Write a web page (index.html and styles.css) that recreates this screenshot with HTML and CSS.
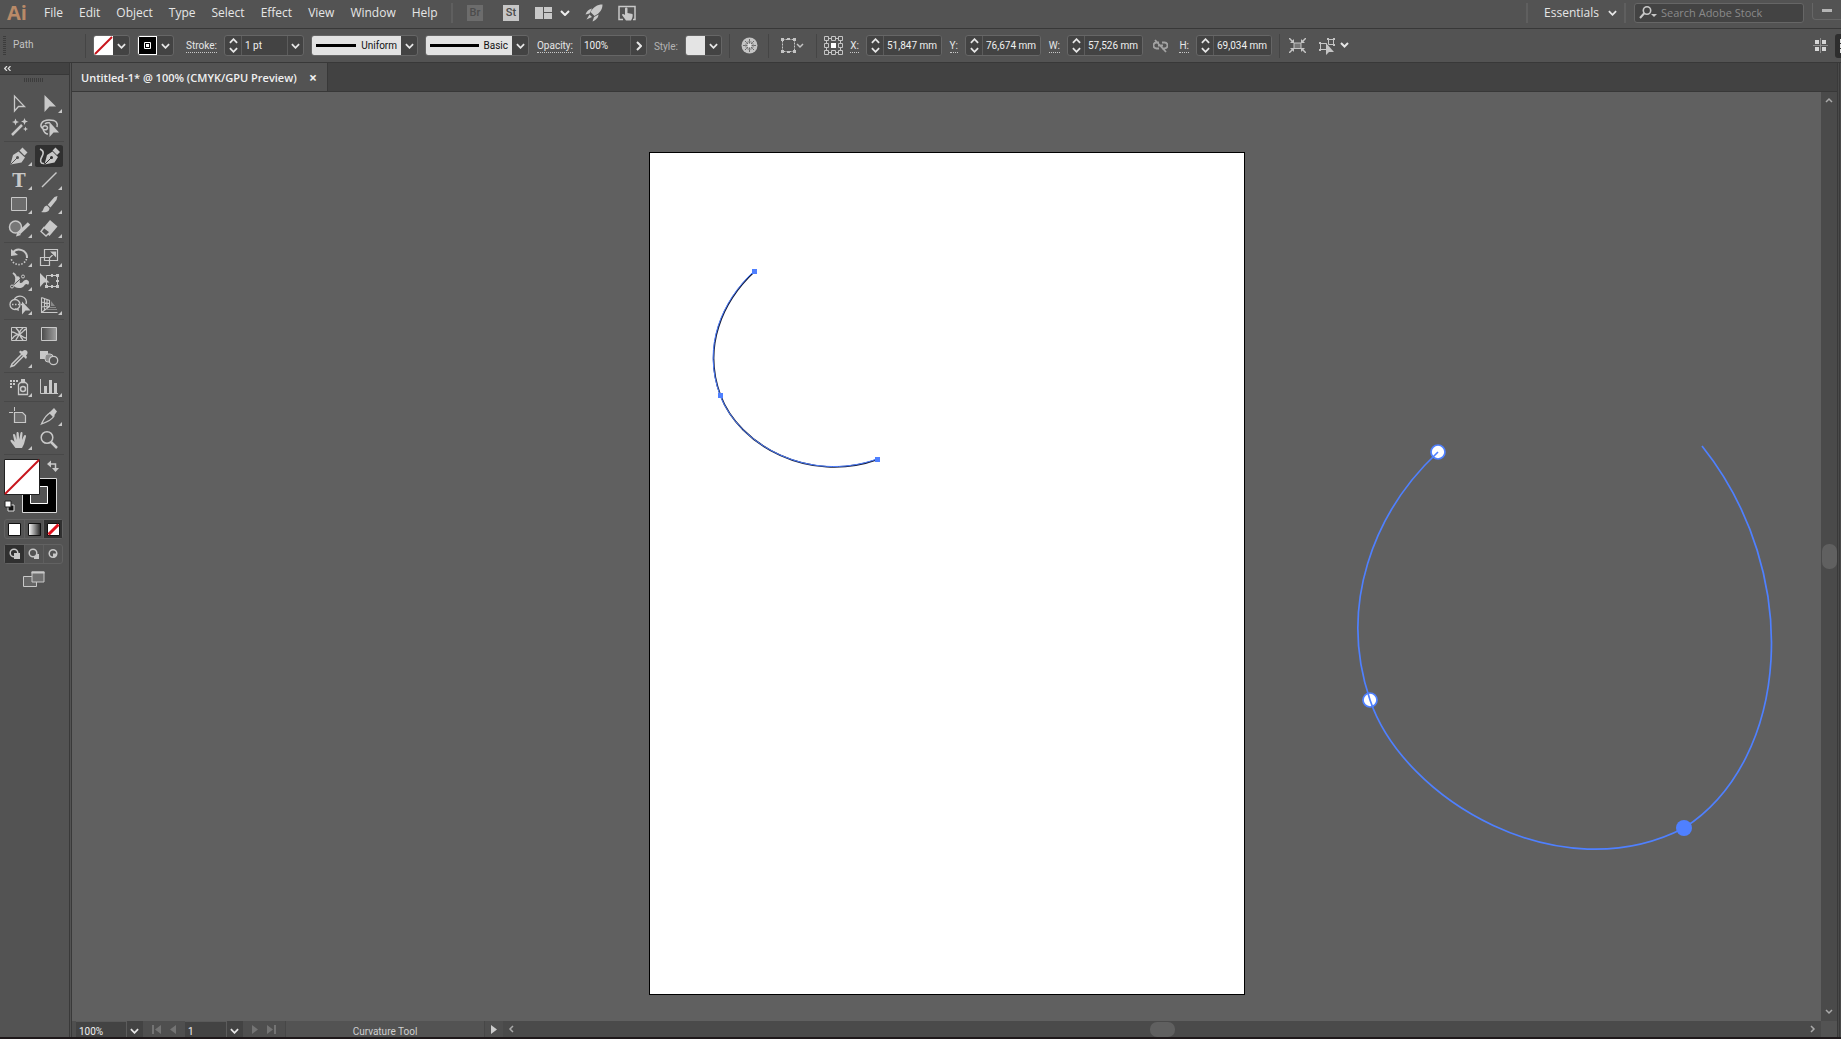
FILE: index.html
```html
<!DOCTYPE html>
<html lang="en">
<head>
<meta charset="utf-8">
<title>Untitled-1 - Adobe Illustrator</title>
<link rel="stylesheet" href="styles.css">
</head>
<body>
<svg class="defs" width="0" height="0" aria-hidden="true">
  <defs>
    <symbol id="chev" viewBox="0 0 10 6"><path d="M1 1l4 4 4-4" fill="none" stroke="currentColor" stroke-width="2"/></symbol>
    <symbol id="spin" viewBox="0 0 10 16"><path d="M1 5l4-4 4 4M1 11l4 4 4-4" fill="none" stroke="currentColor" stroke-width="2"/></symbol>
    <symbol id="flag" viewBox="0 0 28 24"><path d="M27 18v4h-4z" fill="currentColor"/></symbol>
    <linearGradient id="gr"><stop offset="0" stop-color="#4a4a4a"/><stop offset="1" stop-color="#a0a0a0"/></linearGradient>
    <linearGradient id="bw"><stop offset="0" stop-color="#fff"/><stop offset="1" stop-color="#222"/></linearGradient>
  </defs>
</svg>

<header class="menubar">
  <div class="logo">Ai</div>
  <nav class="menus">
    <button>File</button><button>Edit</button><button>Object</button><button>Type</button><button>Select</button><button>Effect</button><button>View</button><button>Window</button><button>Help</button>
  </nav>
  <span class="sep"></span>
  <div class="apps">
    <button class="app off">Br</button>
    <button class="app">St</button>
    <button class="arrange" aria-label="Arrange documents">
      <svg width="17" height="12"><path d="M0 0h8v12H0zM9 0h8v5H9zM9 6h8v6H9z" fill="currentColor"/></svg>
      <svg width="10" height="6" class="bright"><use href="#chev"/></svg>
    </button>
    <button class="plain" aria-label="GPU performance">
      <svg width="18" height="18" viewBox="0 0 18 18"><path d="M17.500 .5C12 .5 8.500 3 5.500 8l4 4C15 9 17.500 5.500 17.500 .5zM7 4.500C4 5 1.500 7.500 .5 10.500l4-1zM13.500 10.500c0 3-2.500 5.500-6 7l1.500-4.500zM4.500 10.500l-3 5 5.500-2.500z" fill="currentColor"/></svg>
    </button>
    <button class="plain" aria-label="Touch workspace">
      <svg width="18" height="16" viewBox="0 0 18 16"><path d="M5 14.500H1v-13h16v13h-2" fill="none" stroke="currentColor" stroke-width="1.500"/><path d="M7 3.500c0-1.500 2.500-1.500 2.500 0V8l5 1c.5 2 0 4-1.500 6.500H8L4 10c0-1.500 1.500-1.500 3 0z" fill="currentColor"/></svg>
    </button>
  </div>
  <div class="workspace">
    <span class="sep"></span>
    <button class="essentials">Essentials <svg width="9" height="6"><use href="#chev"/></svg></button>
    <span class="sep"></span>
    <label class="search">
      <svg width="18" height="14" viewBox="0 0 18 14"><circle cx="8" cy="4.500" r="3.700" fill="none" stroke="currentColor" stroke-width="1.600"/><path d="M5.500 7L1 12" stroke="currentColor" stroke-width="2"/><path d="M12 8h6l-3 3z" fill="currentColor"/></svg>
      <input type="text" placeholder="Search Adobe Stock" aria-label="Search Adobe Stock">
    </label>
    <button class="minimize" aria-label="Minimize"><i></i></button>
  </div>
</header>

<div class="control">
  <span class="grip"></span>
  <span class="kind">Path</span>
  <span class="sep"></span>
  <div class="combo">
    <button class="swatch fill-none" aria-label="Fill"><svg width="19" height="19"><path d="M1 18L18 1" stroke="#c8141c" stroke-width="2"/></svg></button>
    <button class="drop" aria-label="Fill options"><svg width="9" height="6"><use href="#chev"/></svg></button>
  </div>
  <div class="combo">
    <button class="swatch stroke-black" aria-label="Stroke color"><svg width="17" height="17"><path d="M5.500 5.500h6v6h-6z" fill="none" stroke="#fff"/><path d="M7 7h3v3H7z" fill="#fff"/></svg></button>
    <button class="drop" aria-label="Stroke color options"><svg width="9" height="6"><use href="#chev"/></svg></button>
  </div>
  <label class="lbl l36" for="stroke"><span>Stroke:</span></label>
  <div class="combo w80">
    <button class="step" aria-label="Step stroke"><svg width="9" height="15"><use href="#spin"/></svg></button>
    <input id="stroke" value="1 pt">
    <button class="drop" aria-label="Stroke weights"><svg width="9" height="6"><use href="#chev"/></svg></button>
  </div>
  <div class="combo w107">
    <button class="profile"><i></i>Uniform</button>
    <button class="drop" aria-label="Width profiles"><svg width="9" height="6"><use href="#chev"/></svg></button>
  </div>
  <div class="combo w104">
    <button class="profile"><i></i>Basic</button>
    <button class="drop" aria-label="Brushes"><svg width="9" height="6"><use href="#chev"/></svg></button>
  </div>
  <label class="lbl l37" for="opacity"><span>Opacity:</span></label>
  <div class="combo w67">
    <input id="opacity" value="100%">
    <button class="drop" aria-label="Opacity slider"><svg width="6" height="10"><path d="M1 1l4 4-4 4" fill="none" stroke="currentColor" stroke-width="2"/></svg></button>
  </div>
  <span class="lbl l24 dim">Style:</span>
  <div class="combo">
    <button class="swatch style-swatch" aria-label="Graphic style"></button>
    <button class="drop" aria-label="Graphic styles"><svg width="9" height="6"><use href="#chev"/></svg></button>
  </div>
  <span class="sep"></span>
  <button class="icon i24" aria-label="Recolor artwork"><svg width="17" height="17" viewBox="0 0 17 17"><circle cx="8.500" cy="8.500" r="8" fill="currentColor"/><path d="M8.500 2v13M2 8.500h13M4 4l9 9M13 4l-9 9" stroke="#6a6a6a"/><circle cx="8.500" cy="8.500" r="4" fill="none" stroke="#8a8a8a"/><circle cx="8.500" cy="8.500" r="2" fill="#ddd"/></svg></button>
  <span class="sep"></span>
  <button class="icon i33" aria-label="Align to selection"><svg width="23" height="15" viewBox="0 0 23 15"><path d="M1.500 1.500h12v12h-12z" fill="none" stroke="currentColor" stroke-dasharray="2 1"/><path d="M0 0h3v3H0zM12 0h3v3h-3zM0 12h3v3H0zM12 12h3v3h-3zM6 0h3v2H6zM6 13h3v2H6z" fill="currentColor"/><path d="M16 6l3 3 3-3" fill="none" stroke="currentColor" stroke-width="1.500"/></svg></button>
  <span class="sep"></span>
  <button class="icon i19" aria-label="Reference point"><svg width="19" height="19" viewBox="0 0 19 19"><path d="M.5 .5h4v4h-4zM7.500 .5h4v4h-4zM14.500 .5h4v4h-4zM.5 7.500h4v4h-4zM14.500 7.500h4v4h-4zM.5 14.500h4v4h-4zM7.500 14.500h4v4h-4zM14.500 14.500h4v4h-4zM4.500 2.500h3M11.500 2.500h3M4.500 16.500h3M11.500 16.500h3M2.500 4.500v3M2.500 11.500v3M16.500 4.500v3M16.500 11.500v3" fill="none" stroke="currentColor"/><path d="M7 7h5v5H7z" fill="#fff"/></svg></button>
  <label class="lbl l9" for="px"><span>X:</span></label>
  <div class="combo w76"><button class="step" aria-label="Step X"><svg width="9" height="15"><use href="#spin"/></svg></button><input id="px" value="51,847 mm"></div>
  <label class="lbl l9" for="py"><span>Y:</span></label>
  <div class="combo w76"><button class="step" aria-label="Step Y"><svg width="9" height="15"><use href="#spin"/></svg></button><input id="py" value="76,674 mm"></div>
  <label class="lbl l12" for="pw"><span>W:</span></label>
  <div class="combo w76"><button class="step" aria-label="Step W"><svg width="9" height="15"><use href="#spin"/></svg></button><input id="pw" value="57,526 mm"></div>
  <button class="icon i20 faded" aria-label="Constrain proportions"><svg width="15" height="14" viewBox="0 0 15 14"><path d="M6 3.500H3.500a3 3 0 0 0 0 6H6M9 3.500h2.500a3 3 0 0 1 0 6H9M5 6.500h5M2 1l11 12" fill="none" stroke="currentColor" stroke-width="1.800"/></svg></button>
  <label class="lbl l12" for="ph"><span>H:</span></label>
  <div class="combo w76"><button class="step" aria-label="Step H"><svg width="9" height="15"><use href="#spin"/></svg></button><input id="ph" value="69,034 mm"></div>
  <span class="sep"></span>
  <button class="icon i20" aria-label="Isolate selected object"><svg width="17" height="15" viewBox="0 0 17 15"><path d="M5 5h7v5.500H5z" fill="#777" stroke="currentColor"/><path d="M0 0l4 4M17 0l-4 4M0 15l4-4M17 15l-4-4" stroke="currentColor" stroke-width="1.500"/><path d="M5 1v4H1zM12 1v4h4zM5 14v-4H1zM12 14v-4h4z" fill="currentColor"/></svg></button>
  <button class="icon i40" aria-label="Select similar objects"><svg width="30" height="18" viewBox="0 0 30 18"><path d="M1.500 6.500h6v6h-6zM9.500 2.500h5v5h-5z" fill="none" stroke="currentColor"/><path d="M0 5h2v2H0zM0 12h2v2H0zM14 1h2v2h-2zM14 7h2v2h-2zM8 1h2v2H8z" fill="currentColor"/><path d="M7 6v12l3-3h5z" fill="currentColor"/><path d="M22 6l3.500 3.500L29 6" fill="none" stroke="#e6e6e6" stroke-width="2"/></svg></button>
  <div class="panel-ends">
    <button class="icon i20" aria-label="Align panels"><svg width="15" height="15" viewBox="0 0 15 15"><path d="M2 2h4v4H2zM9 2h4v4H9zM2 9h4v4H2zM9 9h4v4H9z" fill="#d6d6d6"/><path d="M7.500 0v15M0 7.500h15" stroke="#8c8c8c"/></svg></button>
    <button class="edge-btn" aria-label="Panel options"><i></i></button>
  </div>
</div>

<div class="body">
  <aside class="tools">
    <div class="tools-head"><svg width="7" height="5" viewBox="0 0 7 5"><path d="M3 0L.7 2.500 3 5M6.500 0L4.200 2.500 6.500 5" fill="none" stroke="#ddd" stroke-width="1.200"/></svg></div>
    <span class="hgrip"></span>
    <div class="group">
      <button aria-label="Selection"><svg viewBox="0 0 28 24"><path d="M9.500 5v15l4-4.500h6z" fill="none" stroke="currentColor" stroke-width="1.300"/></svg></button>
      <button aria-label="Direct selection"><svg viewBox="0 0 28 24"><path d="M9.500 4v17l5-5.500H21z" fill="currentColor"/><use href="#flag"/></svg></button>
      <button aria-label="Magic wand"><svg viewBox="0 0 28 24"><path d="M7 20L17 10" stroke="currentColor" stroke-width="2.500"/><path d="M10.500 3.500l1 2.500 2.500 1-2.500 1-1 2.500-1-2.500L7 7l2.500-1zM19.500 3l1 2.500 2.500 1-2.500 1-1 2.500-1-2.500-2.500-1 2.500-1zM20.500 11.500l.7 1.800 1.800.7-1.800.7-.7 1.800-.7-1.800-1.800-.7 1.800-.7z" fill="currentColor"/></svg></button>
      <button aria-label="Lasso"><svg viewBox="0 0 28 24"><path d="M8 14C4 11 6 5 14 5S23 8.500 22 12M8 14a2.500 2 0 1 0 3-3 2.500 2 0 0 0-3 3c.5 3 3 5 5 5M10 9c1-1 3-1.500 5-1" fill="none" stroke="currentColor" stroke-width="1.500"/><path d="M14.500 7v15l4-4.500H24z" fill="currentColor"/></svg></button>
    </div>
    <hr>
    <div class="group">
      <button aria-label="Pen"><svg viewBox="0 0 28 24"><path d="M5.500 20.500l2.500-9.500 5.500-3.500 6.500 6-3.500 5zM14.500 6.500l3-3 5 5-3 3z" fill="currentColor"/><path d="M6 20l6-6" stroke="#535353"/><circle cx="12.500" cy="13.500" r="1.500" fill="#535353"/><use href="#flag"/></svg></button>
      <button aria-label="Curvature" class="on"><svg viewBox="0 0 28 24"><path d="M9.500 20.500L12 11l5.500-3.500 5.500 5.500-3.500 5.500zM17.500 6.500l3-3 4.500 4.500-3 3z" fill="currentColor"/><path d="M10 20l6-6" stroke="#303030"/><circle cx="16.500" cy="13.500" r="1.500" fill="#303030"/><path d="M5 5c5 2 3 6 1.500 8.500S5 20 9 19.500" fill="none" stroke="currentColor" stroke-width="1.600"/></svg></button>
      <button aria-label="Type"><svg viewBox="0 0 28 24"><text x="14" y="19" class="tee">T</text><use href="#flag"/></svg></button>
      <button aria-label="Line segment"><svg viewBox="0 0 28 24"><path d="M7 19L21.500 4.500" stroke="currentColor" stroke-width="1.500"/><use href="#flag"/></svg></button>
      <button aria-label="Rectangle"><svg viewBox="0 0 28 24"><path d="M6.500 5.500h15v13h-15z" fill="#6c6c6c" stroke="currentColor"/><use href="#flag"/></svg></button>
      <button aria-label="Paintbrush"><svg viewBox="0 0 28 24"><path d="M22.500 4l-1 4-6 7.500-2.800-2.800L19.500 5zM12 13.500l2.500 2.500c0 4-4 5-8.500 4 3-1 2-6 6-6.500z" fill="currentColor"/><use href="#flag"/></svg></button>
      <button aria-label="Shaper"><svg viewBox="0 0 28 24"><circle cx="10.500" cy="11" r="6" fill="#777" stroke="currentColor" stroke-width="1.500"/><path d="M14 17L24 7.500" stroke="currentColor" stroke-width="3.500"/><path d="M11 20.500l1.500-5 3.500 3.500z" fill="currentColor"/><use href="#flag"/></svg></button>
      <button aria-label="Eraser"><svg viewBox="0 0 28 24"><path d="M15 4l7.500 6.500-8 9.500L7 13.500z" fill="currentColor"/><path d="M9 11.500l-3 4 5 4.500 4-4z" fill="#535353" stroke="currentColor" stroke-width="1.400"/><use href="#flag"/></svg></button>
    </div>
    <hr>
    <div class="group">
      <button aria-label="Rotate"><svg viewBox="0 0 28 24"><path d="M7.500 8a8 8 0 0 1 14.500 5" fill="none" stroke="currentColor" stroke-width="2"/><path d="M21.500 14a8 8 0 0 1-15.500-1" fill="none" stroke="currentColor" stroke-width="1.600" stroke-dasharray="1.500 1.500"/><path d="M6 4v7l7-1z" fill="currentColor"/><use href="#flag"/></svg></button>
      <button aria-label="Scale"><svg viewBox="0 0 28 24"><path d="M9.500 4.500h13v11h-13zM5.500 12.500h9v8h-9z" fill="none" stroke="currentColor" stroke-width="1.200"/><path d="M15 12.500l5-5M16.500 7H20.500v4z" fill="currentColor" stroke="currentColor" stroke-width="1.200"/><use href="#flag"/></svg></button>
      <button aria-label="Width"><svg viewBox="0 0 28 24"><path d="M6 17c4-1 4-5 5-8s4-2 4 1-1 4 1 4 3-4 6-3 2 4 1 5c-1-2-3-1-4 1s-6 3-9 1-2-1-4 0z" fill="currentColor"/><path d="M8 4c3 2 4 4 3 8" fill="none" stroke="currentColor" stroke-width="2"/><path d="M7 17.500L18 7.500" stroke="#535353"/><circle cx="7" cy="17.500" r="1.500" fill="#535353" stroke="currentColor"/><circle cx="18" cy="7.500" r="1.500" fill="#535353" stroke="currentColor"/><use href="#flag"/></svg></button>
      <button aria-label="Free transform"><svg viewBox="0 0 28 24"><path d="M11.500 6.500h11v11h-11z" fill="none" stroke="currentColor"/><path d="M21 5h3v3h-3zM21 16h3v3h-3zM10 16h3v3h-3zM16 5h2v3h-2zM16 16h2v3h-2zM21 11h3v2h-3z" fill="currentColor"/><path d="M5 4v14l4-4.500h5.500z" fill="currentColor"/></svg></button>
      <button aria-label="Shape builder"><svg viewBox="0 0 28 24"><circle cx="10" cy="11.500" r="5" fill="none" stroke="currentColor" stroke-width="1.300"/><path d="M9 7a6 5.500 0 0 1 12 4M14 17c-2 0-3-1-4-1" fill="none" stroke="currentColor" stroke-width="1.300"/><path d="M7 11.500h10" stroke="currentColor" stroke-width="1.600" stroke-dasharray="1.500 1.500"/><path d="M17 8.500v13l3.500-4h5z" fill="currentColor"/><use href="#flag"/></svg></button>
      <button aria-label="Perspective grid"><svg viewBox="0 0 28 24"><path d="M6.500 4.500v15h16M6.500 19.500l8-6V7.500l-8-3M9.500 5.500v11M12 6.500v9M6.500 9l8 1.500M6.500 14l8-1" fill="none" stroke="currentColor" stroke-width="1.100"/><path d="M16 8l4 5h-4zM15 14h6v1h-7zM12 16h10v1H11z" fill="#8a8a8a"/><use href="#flag"/></svg></button>
    </div>
    <hr>
    <div class="group">
      <button aria-label="Mesh"><svg viewBox="0 0 28 24"><path d="M6.500 5.500h15v13h-15z" fill="none" stroke="currentColor"/><path d="M7 10c4 0 5 4 8 2s4-4 6-5M7 17c2-4 6-5 8-4s4 3 6 3M11 6c3 3 4 5 3 7s-3 4-3 5M18 6c-3 2-4 4-3 7s2 4 3 5" fill="none" stroke="currentColor" stroke-width="1.400"/></svg></button>
      <button aria-label="Gradient"><svg viewBox="0 0 28 24"><path d="M6.500 5.500h15v13h-15z" fill="url(#gr)" stroke="currentColor"/></svg></button>
      <button aria-label="Eyedropper"><svg viewBox="0 0 28 24"><path d="M17 8L7 18l-1 2.500L9 19.500 19 9.500" fill="none" stroke="currentColor" stroke-width="1.500"/><path d="M14 6l7 7 1-2-1-1.500c2-1.500 2-4 .5-5s-3-.5-4.500 1L15.500 4.500z" fill="currentColor"/><use href="#flag"/></svg></button>
      <button aria-label="Blend"><svg viewBox="0 0 28 24"><path d="M5 5h8v8H5z" fill="currentColor"/><rect x="10" y="8" width="8" height="8" rx="3" fill="#8c8c8c" stroke="currentColor"/><circle cx="18.500" cy="14.500" r="4.200" fill="#535353" stroke="currentColor" stroke-width="1.300"/></svg></button>
    </div>
    <hr>
    <div class="group">
      <button aria-label="Symbol sprayer"><svg viewBox="0 0 28 24"><path d="M5 5h2v2H5zM8 5h2v2H8zM11 5h2v2h-2zM5 8h2v2H5zM8 8h2v2H8zM5 11h2v2H5zM16 4h4v3h-4z" fill="currentColor"/><path d="M13.500 19.500V9.500l2-2h5l2 2v10z" fill="none" stroke="currentColor" stroke-width="1.300"/><circle cx="18" cy="14" r="2.500" fill="none" stroke="currentColor" stroke-width="1.500"/><use href="#flag"/></svg></button>
      <button aria-label="Column graph"><svg viewBox="0 0 28 24"><path d="M5.500 4v14.500H23" fill="none" stroke="currentColor"/><path d="M9 11h3v7H9zM14 5h3v13h-3zM19 8h3v10h-3z" fill="currentColor"/><use href="#flag"/></svg></button>
    </div>
    <hr>
    <div class="group">
      <button aria-label="Artboard"><svg viewBox="0 0 28 24"><path d="M9.500 3v4M4 8.500h4" stroke="currentColor"/><path d="M9.500 8.500h8l3 3v7h-11z" fill="#6c6c6c" stroke="currentColor" stroke-width="1.200"/></svg></button>
      <button aria-label="Slice"><svg viewBox="0 0 28 24"><path d="M6.500 20c2-4 3-8 9-11.500l3.500 3.500C17 16 12 18 6.500 20z" fill="none" stroke="currentColor" stroke-width="1.300"/><path d="M14 9l5-5 3 3.500-4 5.500z" fill="currentColor"/><use href="#flag"/></svg></button>
      <button aria-label="Hand"><svg viewBox="0 0 28 24"><path d="M10.500 20L6 14c-1.500-2 .5-3 2-1.500l1.500 1.500L8 7c0-1.500 1.800-1.500 2.200 0l1.300 5V5c0-1.500 2-1.500 2.200 0l.5 6.500L15.500 5c.4-1.500 2.200-1 2 .4L17 12l2-4.500c.8-1.200 2.300-.5 2 1L19 16l-2 4z" fill="currentColor"/><use href="#flag"/></svg></button>
      <button aria-label="Zoom"><svg viewBox="0 0 28 24"><circle cx="12" cy="9.500" r="5.800" fill="none" stroke="currentColor" stroke-width="1.500"/><path d="M16 14l6 6" stroke="currentColor" stroke-width="2.500"/></svg></button>
    </div>
    <hr>
    <button class="fillstroke" aria-label="Fill and stroke">
      <svg width="60" height="58" viewBox="5 457 60 58">
        <path d="M23.500 478.500h34v34h-34z" fill="#000" stroke="#d8d8d8"/><path d="M31.500 486.500h17v17h-17z" fill="#535353" stroke="#fff"/>
        <path d="M5.500 459.500h35v35h-35z" fill="#fff" stroke="#222"/><path d="M6 494L40 460" stroke="#c8141c" stroke-width="2"/>
        <path d="M51 464h5.500v6" fill="none" stroke="#c8c8c8" stroke-width="1.500"/><path d="M52 460.500v7l-4-3.500zM53 468h7l-3.500 4z" fill="#c8c8c8"/>
        <path d="M9 505h6v6H9z" fill="#111" stroke="#ddd"/><path d="M6 501h6v6H6z" fill="#fff" stroke="#222"/>
      </svg>
    </button>
    <div class="modes">
      <button aria-label="Color"><svg width="13" height="13"><path d="M.5 .5h12v12H.5z" fill="#fff" stroke="#111"/></svg></button>
      <button aria-label="Gradient fill"><svg width="13" height="13"><path d="M.5 .5h12v12H.5z" fill="url(#bw)" stroke="#111"/></svg></button>
      <button aria-label="None" class="on"><svg width="13" height="13"><path d="M.5 .5h12v12H.5z" fill="#fff" stroke="#111"/><path d="M1.500 11.500l10-10" stroke="#e0101c" stroke-width="3"/></svg></button>
    </div>
    <div class="modes">
      <button aria-label="Draw normal" class="on"><svg width="12" height="12"><circle cx="5" cy="5" r="3.800" fill="none" stroke="currentColor" stroke-width="1.500"/><path d="M5 5h6v6H5z" fill="currentColor"/></svg></button>
      <button aria-label="Draw behind"><svg width="12" height="12"><path d="M6 6h5v5H6z" fill="currentColor"/><circle cx="5" cy="5" r="3.800" fill="#535353" stroke="currentColor" stroke-width="1.500"/></svg></button>
      <button aria-label="Draw inside"><svg width="12" height="12"><circle cx="6" cy="5.500" r="3.800" fill="none" stroke="currentColor" stroke-width="1.500"/><path d="M6 5.500h4v2l-2 2H6z" fill="currentColor"/></svg></button>
    </div>
    <button class="screen" aria-label="Change screen mode"><svg width="22" height="17"><path d="M.5 5.500h13v10H.5z" fill="#666" stroke="currentColor"/><path d="M9 1h12v10H9z" fill="#707070" stroke="currentColor"/><path d="M8.500 1.500h13" stroke="currentColor" stroke-width="2"/></svg></button>
  </aside>

  <main class="doc">
    <div class="tabs">
      <div class="tab"><span>Untitled-1* @ 100% (CMYK/GPU Preview)</span><button aria-label="Close">×</button></div>
    </div>
    <div class="stage">
      <div class="canvas">
        <div class="artboard"></div>
        <svg class="drawing" width="1749" height="929" viewBox="72 92 1749 929">
          <g fill="none">
            <path d="M754.500 271.500C722 302 702.500 347 720.500 395.500C739 445 809 484 877.500 459.500" stroke="#141c3c" stroke-width="1.600"/>
            <path d="M754 271C721.500 301.500 702 346.500 720 395C738.500 444.500 808.500 483.500 877 459" stroke="#4f80ff" stroke-width="1"/>
          </g>
          <path d="M752 269h5v5h-5zM718 393h5v5h-5zM875 457h5v5h-5z" fill="#4f80ff"/>
          <circle cx="1438" cy="452" r="7" fill="#fff" stroke="#4f80ff" stroke-width="1.700"/>
          <circle cx="1370" cy="700" r="7" fill="#fff" stroke="#4f80ff" stroke-width="1.700"/>
          <path d="M1438 452C1373 513 1338 606 1370 700C1404 800 1560 892 1684 828C1790 760 1804 574 1702 446" fill="none" stroke="#4f80ff" stroke-width="1.700"/>
          <circle cx="1684" cy="828" r="8" fill="#4f80ff"/>
        </svg>
      </div>
      <div class="vscroll">
        <button aria-label="Scroll up"><svg width="8" height="6"><path d="M1 5l3-3 3 3" fill="none" stroke="currentColor" stroke-width="1.500"/></svg></button>
        <i></i>
        <button aria-label="Scroll down"><svg width="8" height="6"><path d="M1 1l3 3 3-3" fill="none" stroke="currentColor" stroke-width="1.500"/></svg></button>
      </div>
    </div>
    <footer class="status">
      <input class="zoomval" value="100%" aria-label="Zoom level">
      <button class="sdrop" aria-label="Zoom levels"><svg width="9" height="6"><use href="#chev"/></svg></button>
      <div class="steps">
        <button aria-label="First"><svg width="9" height="9"><path d="M0 0h2v9H0zM9 0v9L3 4.500z" fill="currentColor"/></svg></button>
        <button aria-label="Previous"><svg width="6" height="9"><path d="M6 0v9L0 4.500z" fill="currentColor"/></svg></button>
      </div>
      <input class="pageval" value="1" aria-label="Artboard number">
      <button class="sdrop" aria-label="Artboards"><svg width="9" height="6"><use href="#chev"/></svg></button>
      <div class="steps">
        <button aria-label="Next"><svg width="6" height="9"><path d="M0 0v9l6-4.500z" fill="currentColor"/></svg></button>
        <button aria-label="Last"><svg width="9" height="9"><path d="M7 0h2v9H7zM0 0v9l6-4.500z" fill="currentColor"/></svg></button>
      </div>
      <span class="toolname">Curvature Tool</span>
      <button class="play" aria-label="Status options"><svg width="6" height="9"><path d="M0 0v9l6-4.500z" fill="currentColor"/></svg></button>
      <div class="hscroll">
        <button aria-label="Scroll left"><svg width="6" height="8"><path d="M5 1L2 4l3 3" fill="none" stroke="currentColor" stroke-width="1.500"/></svg></button>
        <i></i>
        <button aria-label="Scroll right"><svg width="6" height="8"><path d="M1 1l3 3-3 3" fill="none" stroke="currentColor" stroke-width="1.500"/></svg></button>
      </div>
      <span class="corner"></span>
    </footer>
  </main>
  <div class="dock"></div>
</div>
</body>
</html>
```
FILE: styles.css
```css
* { box-sizing: border-box; }
body {
  margin: 0;
  height: 100vh;
  display: flex;
  flex-direction: column;
  overflow: hidden;
  background: #535353;
  border-bottom: 2px solid #1e181a;
  color: #e6e6e6;
  font: 10px/12px Roboto, "Noto Sans", sans-serif;
}
button {
  margin: 0;
  padding: 0;
  border: 0;
  background: none;
  color: inherit;
  font: inherit;
  display: flex;
  align-items: center;
  justify-content: center;
}
input {
  min-width: 0;
  margin: 0;
  padding: 0;
  border: 0;
  background: #434343;
  color: #f0f0f0;
  font: inherit;
  outline: 0;
}
svg { display: block; flex: none; }
.defs { position: absolute; }
.sep { width: 1px; height: 24px; background: #454545; flex: none; }

/* Menu bar */
.menubar {
  flex: none;
  height: 29px;
  display: flex;
  align-items: center;
  padding: 0 0 3px 7px;
  border-bottom: 1px solid #383838;
  font: 12px/16px "Open Sans", "Noto Sans", sans-serif;
}
.menubar .sep { height: 20px; width: 2px; background: #5f5f5f; }
.logo { width: 37px; color: #b98a68; font: bold 20px/22px "Open Sans", sans-serif; }
.menus { display: flex; gap: 16px; width: 407px; }
.apps { display: flex; align-items: center; margin-left: 14px; color: #c8c8c8; gap: 15px; }
.app {
  width: 16px;
  height: 16px;
  margin-right: 5px;
  background: #c6c6c6;
  color: #4a4a4a;
  font: 500 11px/16px Roboto, sans-serif;
}
.app.off { background: #6c6c6c; color: #4c4c4c; }
.apps .arrange { gap: 8px; margin-left: -4px; }
.bright { color: #eee; }
.workspace { margin-left: auto; display: flex; align-items: center; }
.essentials { gap: 9px; margin: 0 13px 0 11px; }
.search {
  display: flex;
  align-items: center;
  gap: 4px;
  width: 170px;
  height: 20px;
  margin-left: 8px;
  padding: 0 4px;
  border: 1px solid #666;
  border-radius: 3px;
  background: #434343;
  color: #c8c8c8;
}
.search input { flex: 1; background: none; font: 11px/16px "Open Sans", sans-serif; }
.search input::placeholder { color: #8a8a8a; opacity: 1; }
.minimize {
  align-self: flex-start;
  width: 29px;
  height: 17px;
  margin-left: 8px;
  border: 1px solid #666;
  border-width: 0 0 1px 1px;
  border-radius: 0 0 0 4px;
}
.minimize i { width: 10px; height: 3px; background: #b4b4b4; }
.essentials + .sep { margin-left: -6px; }
.workspace > .sep:first-child { margin-right: 5px; }

/* Control bar */
.control {
  flex: none;
  height: 34px;
  display: flex;
  align-items: center;
  gap: 7px;
  padding-left: 3px;
  border-bottom: 1px solid #383838;
}
.grip {
  width: 3px;
  height: 20px;
  background: repeating-linear-gradient(#3c3c3c 0 1px, #535353 1px 2px);
}
.kind { width: 65px; color: #c4c4c4; padding-bottom: 2px; }
.combo {
  display: flex;
  flex: none;
  height: 21px;
  border: 1px solid #666;
  border-radius: 3px;
  background: #434343;
  overflow: hidden;
}
.w80 { width: 80px; }
.w107 { width: 107px; }
.w104 { width: 104px; }
.w67 { width: 67px; }
.w76 { width: 76px; }
.combo input { flex: 1; padding: 0 0 0 3px; }
.swatch { width: 19px; }
.fill-none { background: #fff; }
.stroke-black { background: #000; border: 1px solid #fff; }
.style-swatch { background: #e4e4e4; }
.drop { width: 16px; flex: none; }
.combo input + .drop { border-left: 1px solid #5c5c5c; }
.step { width: 17px; flex: none; border-right: 1px solid #5c5c5c; }
.profile { flex: 1; gap: 5px; padding: 0 4px; background: #e2e2e2; color: #111; }
.profile i { flex: 1; height: 3px; background: #000; }
.lbl { flex: none; text-align: right; white-space: nowrap; display: flex; justify-content: flex-end; padding-top: 2px; }
.lbl span { border-bottom: 1px dotted #c8c8c8; }
.dim { color: #b4b4b4; }
.l9 { width: 9px; }
.l12 { width: 12px; }
.l24 { width: 24px; }
.l36 { width: 36px; }
.l37 { width: 37px; }
.icon { flex: none; color: #c4c4c4; }
.faded { color: #a2a2a2; }
.i19 { width: 19px; }
.i20 { width: 20px; }
.i24 { width: 24px; }
.i33 { width: 33px; }
.i40 { width: 40px; }
.panel-ends { margin-left: auto; display: flex; align-items: center; gap: 5px; }
.edge-btn { width: 6px; height: 24px; background: #2e2e2e; border-radius: 3px 0 0 3px; justify-content: flex-end; }
.edge-btn i { width: 1px; height: 14px; background: repeating-linear-gradient(#ddd 0 4px, #2e2e2e 4px 5px); }

/* Body */
.body { flex: 1; min-height: 0; display: flex; }
.tools {
  flex: none;
  width: 72px;
  display: flex;
  flex-direction: column;
  border-right: 3px double #393939;
  color: #c8c8c8;
}
.tools-head {
  height: 12px;
  padding: 3px 4px;
  background: #424242;
  border-bottom: 1px solid #383838;
}
.hgrip {
  width: 20px;
  height: 4px;
  margin: 3px 0 9px 24px;
  background: repeating-linear-gradient(90deg, #3c3c3c 0 1px, #535353 1px 2px);
}
.group { display: grid; grid-template-columns: 28px 28px; column-gap: 2px; padding-left: 5px; }
.group button { height: 24px; border-radius: 3px; }
.group svg { width: 28px; height: 24px; }
.group .on { background: #303030 content-box; padding: 1px 0; }
.tools hr { width: 60px; height: 1px; margin: 2px 0 2px 4px; border: 0; background: #484848; }
.tee { font: bold 18px "DejaVu Serif", serif; text-anchor: middle; fill: #c8c8c8; }
.fillstroke { margin-left: 4px; width: 60px; height: 58px; }
.modes {
  display: grid;
  grid-template-columns: repeat(3, 1fr);
  width: 59px;
  height: 20px;
  margin: 4px 0 1px 4px;
  border: 1px solid #626262;
  border-radius: 3px;
}
.modes button + button { border-left: 1px solid #5e5e5e; }
.modes .on { background: #303030; }
.screen { margin: 6px 0 0 23px; width: 22px; }

.doc { flex: 1; min-width: 0; display: flex; flex-direction: column; }
.tabs { flex: none; display: flex; height: 29px; background: #424242; border-bottom: 1px solid #383838; }
.tab {
  display: flex;
  align-items: center;
  justify-content: space-between;
  width: 256px;
  padding: 2px 10px 0 9px;
  background: #535353;
  border-right: 1px solid #383838;
  color: #f0f0f0;
  font: 600 11px/16px "Open Sans", "Noto Sans", sans-serif;
  white-space: nowrap;
}
.tab button { font: bold 14px/14px "Open Sans", sans-serif; }
.stage { flex: 1; min-height: 0; display: flex; }
.canvas { flex: 1; position: relative; overflow: hidden; background: #606060; }
.artboard {
  position: absolute;
  left: 577px;
  top: 60px;
  width: 596px;
  height: 843px;
  background: #fff;
  border: 1px solid #000;
}
.drawing { position: absolute; left: 0; top: 0; }
.vscroll {
  flex: none;
  width: 16px;
  display: flex;
  flex-direction: column;
  align-items: center;
  justify-content: space-between;
  padding: 3px 0 4px;
  background: #4a4a4a;
  color: #aaa;
}
.vscroll i { width: 15px; height: 25px; border-radius: 7px; background: #606060; }
.vscroll button { height: 10px; }

.status { flex: none; display: flex; height: 16px; background: #4f4f4f; }
.status input { padding: 4px 0 0 3px; border-top: 1px solid #5a5a5a; }
.zoomval { width: 50px; margin-left: 4px; }
.pageval { width: 41px; }
.sdrop { width: 17px; padding: 4px 1px 0 0; background: #434343; border-left: 1px solid #5c5c5c; }
.steps { display: flex; align-items: center; justify-content: center; gap: 9px; width: 42px; color: #747474; }
.toolname {
  width: 200px;
  padding-top: 5px;
  text-align: center;
  background: #535353;
  border: solid #474747;
  border-width: 0 1px;
  color: #cfcfcf;
}
.play { width: 18px; color: #ccc; }
.hscroll {
  flex: 1;
  display: flex;
  align-items: center;
  justify-content: space-between;
  padding: 0 5px;
  background: #4a4a4a;
  color: #aaa;
}
.hscroll i { width: 25px; height: 15px; border-radius: 7px; background: #606060; }
.corner { width: 16px; background: #535353; }
.dock { flex: none; width: 4px; border-left: 3px double #393939; background: #4a4a4a; }
```
